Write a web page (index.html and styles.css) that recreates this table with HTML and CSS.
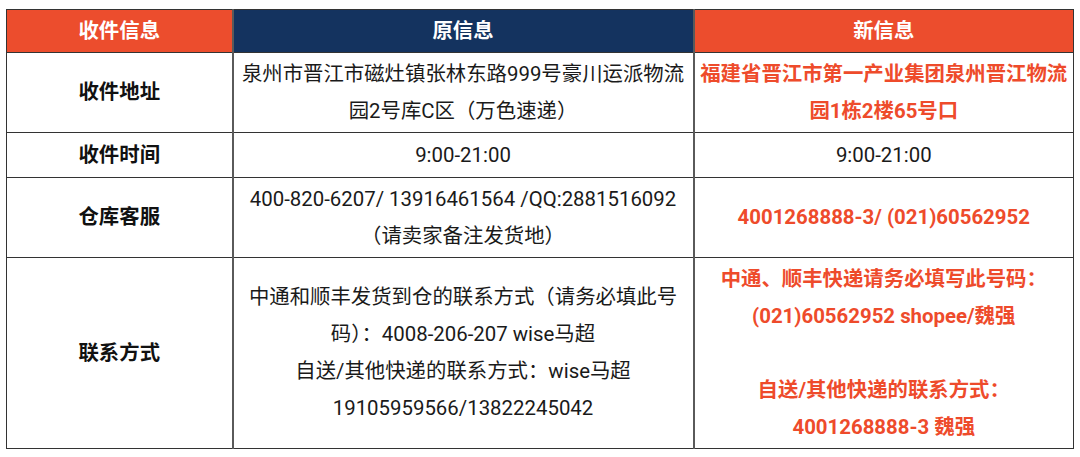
FILE: index.html
```html
<!DOCTYPE html>
<html lang="zh-CN">
<head>
<meta charset="utf-8">
<link rel="stylesheet" href="styles.css">
</head>
<body>
<table class="info">
  <colgroup>
    <col class="c1"><col class="c2"><col class="c3">
  </colgroup>
  <thead>
    <tr class="head">
      <th class="h-red">收件信息</th>
      <th class="h-navy">原信息</th>
      <th class="h-red">新信息</th>
    </tr>
  </thead>
  <tbody>
    <tr class="r1">
      <td class="label">收件地址</td>
      <td class="old">泉州市晋江市磁灶镇张林东路999号豪川运派物流<br>园2号库C区（万色速递）</td>
      <td class="new">福建省晋江市第一产业集团泉州晋江物流<br>园1栋2楼65号口</td>
    </tr>
    <tr class="r2">
      <td class="label">收件时间</td>
      <td class="old">9:00-21:00</td>
      <td class="old">9:00-21:00</td>
    </tr>
    <tr class="r3">
      <td class="label">仓库客服</td>
      <td class="old">400-820-6207/ 13916461564 /QQ:2881516092<br>（请卖家备注发货地）</td>
      <td class="new">4001268888-3/ (021)60562952</td>
    </tr>
    <tr class="r4">
      <td class="label">联系方式</td>
      <td class="old">中通和顺丰发货到仓的联系方式（请务必填此号<br>码）：4008-206-207 wise马超<br>自送/其他快递的联系方式：wise马超<br>19105959566/13822245042</td>
      <td class="new">中通、顺丰快递请务必填写此号码：<br>(021)60562952 shopee/魏强<br>&nbsp;<br>自送/其他快递的联系方式：<br>4001268888-3 魏强</td>
    </tr>
  </tbody>
</table>
</body>
</html>
```

FILE: styles.css
```css
html, body {
  margin: 0;
  padding: 0;
  background: #ffffff;
}

body {
  padding: 9px 0 0 6px;
  font-family: Roboto, "Noto Sans CJK SC", "Noto Sans", sans-serif;
  color: #141414;
}

.info {
  border-collapse: collapse;
  table-layout: fixed;
  width: 1067px;
  border: 1px solid #333333;
}

.c1 { width: 226px; }
.c2 { width: 461px; }
.c3 { width: 380px; }

.info th,
.info td {
  border-top: 1px solid #333333;
  border-bottom: 1px solid #333333;
  border-left: 2px solid #5a5a5a;
  border-right: 2px solid #5a5a5a;
  text-align: center;
  vertical-align: middle;
  padding: 0 2px;
  font-size: 20.4px;
  line-height: 37px;
  white-space: nowrap;
}

.info th:first-child,
.info td:first-child {
  border-left: 1px solid #333333;
}

.info th:last-child,
.info td:last-child {
  border-right: 1px solid #333333;
}

.head th {
  height: 42px;
  color: #ffffff;
  font-weight: 700;
}

.h-red { background: #ec4d2d; }
.h-navy { background: #14335f; }

.r1 td { height: 79px; }
.r2 td { height: 44px; }
.r3 td { height: 79px; }
.r4 td { height: 190px; }

.label {
  font-weight: 700;
  color: #111111;
}

.old {
  font-weight: 400;
  color: #1a1a1a;
}

.new {
  font-weight: 700;
  color: #ee4b2b;
}
```
